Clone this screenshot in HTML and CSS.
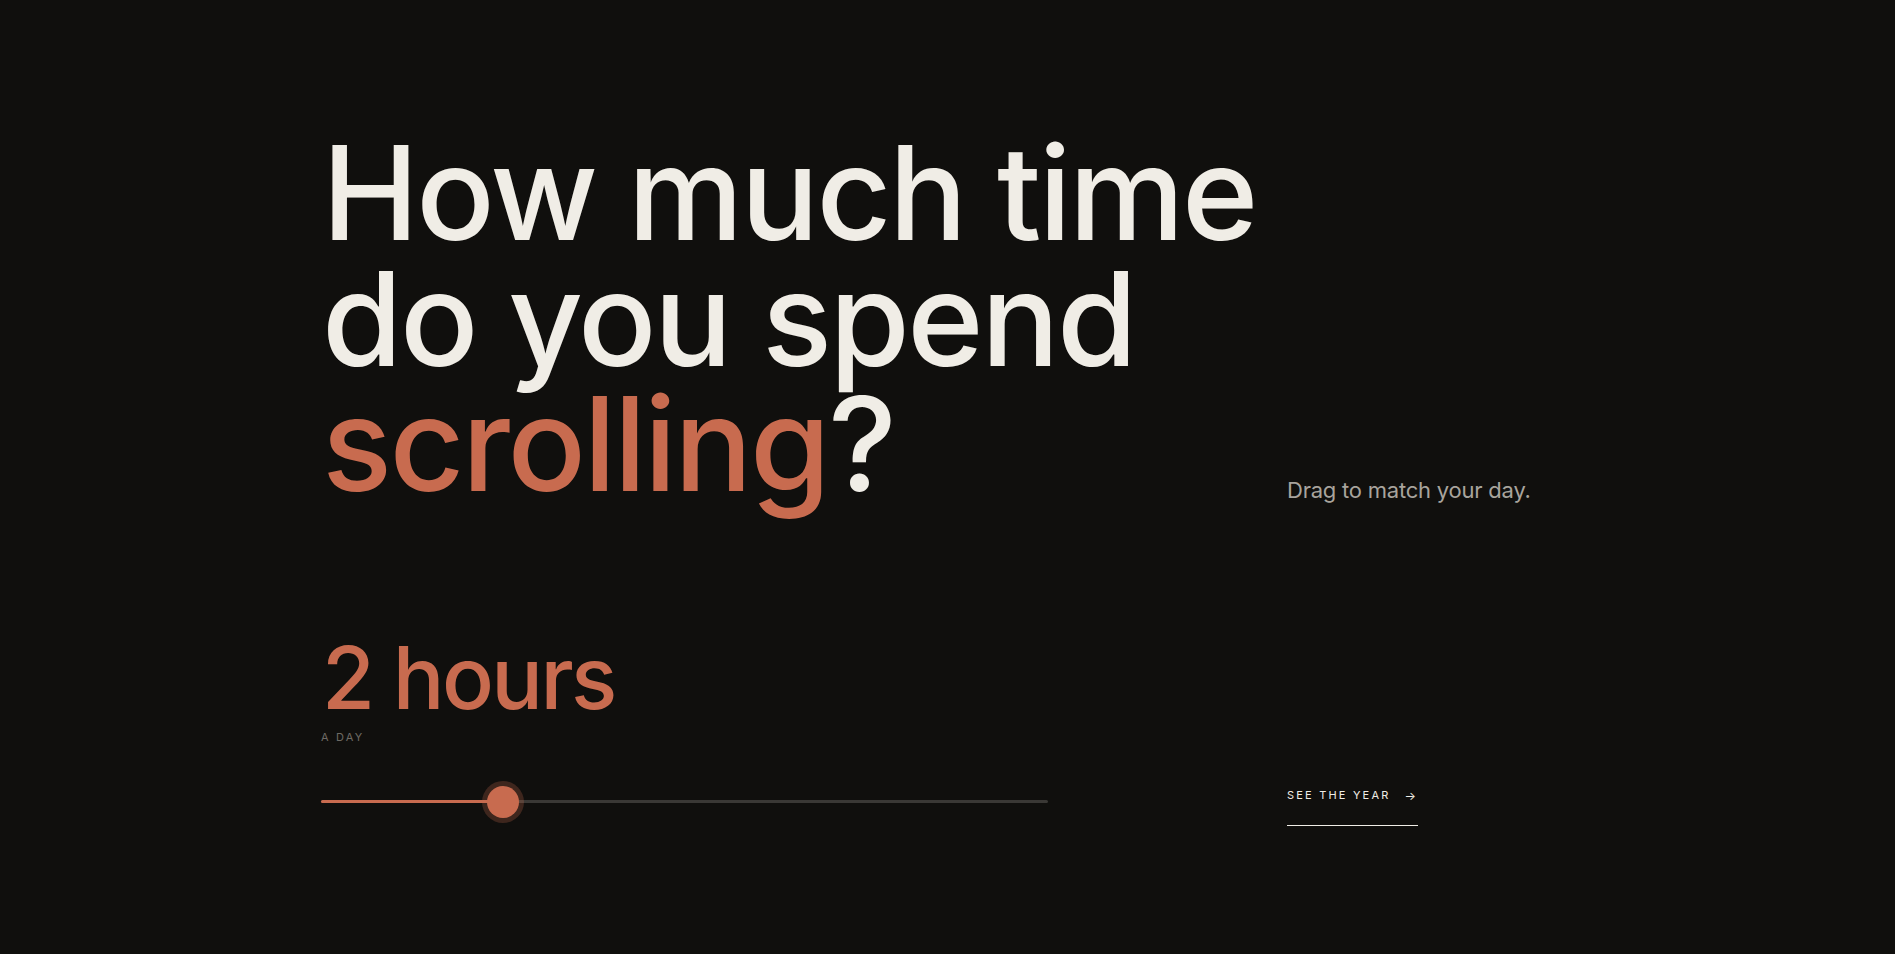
FILE: index.html
```html
<!DOCTYPE html>
<html lang="en">
<head>
<meta charset="utf-8">
<title>How much time do you spend scrolling?</title>
<link rel="stylesheet" href="styles.css">
</head>
<body>
<main class="page">
  <section class="intro">
    <h1 class="headline">How much time<br>do you spend<br><span class="accent">scrolling</span>?</h1>
    <p class="hint">Drag to match your day.</p>
  </section>
  <section class="controls">
    <div class="readout">
      <div class="amount">2 hours</div>
      <div class="unit">A DAY</div>
      <div class="slider">
        <div class="track"><div class="fill" style="width: 25%"></div></div>
        <div class="thumb" style="left: 25%"></div>
      </div>
    </div>
    <a class="cta" href="#year">SEE THE YEAR <span class="arrow">→</span></a>
  </section>
</main>
</body>
</html>
```
FILE: styles.css
```css
html, body {
  margin: 0;
  padding: 0;
  background: #100f0d;
}
body {
  font-family: Inter, "DejaVu Sans", sans-serif;
  color: #f0ede6;
  min-height: 954px;
}
.page {
  width: 1253px;
  margin: 0 auto;
  padding-top: 130px;
}
.intro {
  display: grid;
  grid-template-columns: 940px 1fr;
  column-gap: 26px;
  align-items: end;
}
.headline {
  margin: 0;
  font-size: 130px;
  line-height: 125.5px;
  font-weight: 500;
  letter-spacing: -0.019em;
  padding-left: 1px;
}
.accent {
  color: #c86b4f;
}
.hint {
  margin: 0 0 4px;
  font-size: 22px;
  color: #a8a49d;
  letter-spacing: -0.01em;
}
.controls {
  display: grid;
  grid-template-columns: 940px 1fr;
  column-gap: 26px;
  align-items: end;
  margin-top: 128px;
}
.readout {
  width: 727px;
}
.amount {
  font-size: 86px;
  line-height: 1;
  color: #c86b4f;
  font-weight: 500;
  letter-spacing: -0.03em;
  padding-left: 1px;
}
.unit {
  margin-top: 9px;
  font-size: 11px;
  letter-spacing: 0.2em;
  color: #6e6a64;
  padding-left: 0;
}
.slider {
  position: relative;
  margin-top: 34px;
  height: 48px;
  display: flex;
  align-items: center;
}
.track {
  width: 100%;
  height: 3px;
  background: #3a3835;
  border-radius: 2px;
}
.fill {
  height: 100%;
  background: #c86b4f;
  border-radius: 2px;
}
.thumb {
  position: absolute;
  top: 50%;
  width: 32px;
  height: 32px;
  margin-left: -16px;
  margin-top: -16px;
  border-radius: 50%;
  background: #c86b4f;
  box-shadow: 0 0 0 5px rgba(200, 107, 79, 0.25);
}
.cta {
  justify-self: start;
  display: inline-flex;
  align-items: center;
  gap: 14px;
  font-size: 11px;
  letter-spacing: 0.2em;
  color: #f0ede6;
  text-decoration: none;
  padding: 0 2px 22px 0;
  border-bottom: 1px solid #f0ede6;
}
.arrow {
  font-size: 12px;
  letter-spacing: 0;
}
```
